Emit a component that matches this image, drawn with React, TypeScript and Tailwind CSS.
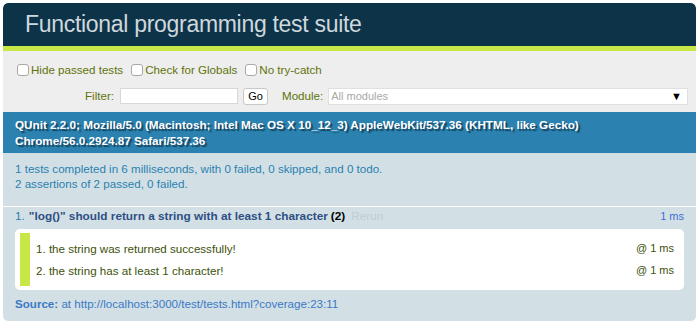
import React from "react";

const font = { fontFamily: '"Liberation Sans", Arial, sans-serif' };

function Check({ label }: { label: string }) {
  return (
    <label className="flex items-center gap-[2px] mr-[8px]">
      <span className="w-[12px] h-[12px] rounded-[3px] border border-[#a9a9a9] bg-white" />
      <span>{label}</span>
    </label>
  );
}

function Assertion({ text }: { text: string }) {
  return (
    <div className="flex justify-between items-center h-[22px] pl-[6px] pr-[10px]">
      <span>{text}</span>
      <span className="text-[11px] text-[#3c510c]">@ 1 ms</span>
    </div>
  );
}

export default function App() {
  return (
    <div className="bg-white w-[700px] h-[324px] pt-[3px] pl-[3px]" style={font}>
      <div className="w-[693px] rounded-[5px] overflow-hidden">
        {/* header */}
        <div className="h-[43px] bg-[#0d3349] flex items-center pl-[22px] rounded-t-[5px]">
          <h1 className="text-[23px] leading-none font-light text-[#cfd8dd] tracking-[-0.3px]">
            Functional programming test suite
          </h1>
        </div>
        <div className="h-[5px] bg-[#c6e746]" />

        {/* toolbar */}
        <div className="h-[61px] bg-[#eeeeee] text-[#5e740b] text-[11.6px] pl-[14px] pr-[8px] pt-[12px]">
          <div className="flex items-center h-[14px]">
            <Check label="Hide passed tests" />
            <Check label="Check for Globals" />
            <Check label="No try-catch" />
          </div>
          <div className="flex items-center mt-[10px] h-[18px]">
            <span className="w-[97px] text-right mr-[6px]">Filter:</span>
            <span className="w-[118px] h-[16px] bg-white border border-[#d8d8d8]" />
            <span className="ml-[5px] w-[25px] h-[17px] rounded-[3px] border border-[#c8c8c8] bg-white text-black text-[11px] flex items-center justify-center">
              Go
            </span>
            <span className="ml-[14px] mr-[5px]">Module:</span>
            <span className="flex-1 h-[17px] bg-white border border-[#e0e0e0] flex items-center justify-between pl-[2px] pr-[5px]">
              <span className="text-[11px] text-[#a8a8a8]">All modules</span>
              <span className="text-[11px] text-black">▼</span>
            </span>
          </div>
        </div>

        {/* user agent */}
        <div
          className="h-[41px] bg-[#2b81af] text-white font-bold text-[11.7px] leading-[16px] px-[12px] pt-[5px]"
          style={{ textShadow: "rgba(0,0,0,0.5) 2px 2px 1px" }}
        >
          QUnit 2.2.0; Mozilla/5.0 (Macintosh; Intel Mac OS X 10_12_3) AppleWebKit/537.36 (KHTML, like Gecko)
          <br />
          Chrome/56.0.2924.87 Safari/537.36
        </div>

        {/* result */}
        <div className="h-[54px] bg-[#d2e0e6] text-[#2b81af] text-[11.6px] leading-[15px] px-[12px] pt-[8px] border-b border-white">
          <p>1 tests completed in 6 milliseconds, with 0 failed, 0 skipped, and 0 todo.</p>
          <p>2 assertions of 2 passed, 0 failed.</p>
        </div>

        {/* tests */}
        <div className="h-[114px] bg-[#d2e0e6] px-[12px] pt-[0px] text-[11.8px]">
          <div className="flex items-center justify-between h-[19px]">
            <div className="flex items-center">
              <span className="text-[#2b81af] mr-[4px]">1.</span>
              <span className="font-bold text-[#2e4f84]">"log()" should return a string with at least 1 character</span>
              <span className="font-bold text-black ml-[3px]">(2)</span>
              <span className="text-[#c2ccd1] ml-[6px]">Rerun</span>
            </div>
            <span className="text-[11px] text-[#3b6fd4]">1 ms</span>
          </div>
          <div className="mt-[3px] bg-white rounded-[5px] h-[61px] py-[4px] pl-[5px] text-[#3c510c] text-[11.6px]">
            <div className="border-l-[10px] border-[#c6e746] h-[53px] flex flex-col justify-center">
              <Assertion text="1. the string was returned successfully!" />
              <Assertion text="2. the string has at least 1 character!" />
            </div>
          </div>
          <div className="mt-[5px] text-[#3b78c4] text-[11.6px]">
            <span className="font-bold">Source:</span> at http://localhost:3000/test/tests.html?coverage:23:11
          </div>
        </div>
      </div>
    </div>
  );
}
